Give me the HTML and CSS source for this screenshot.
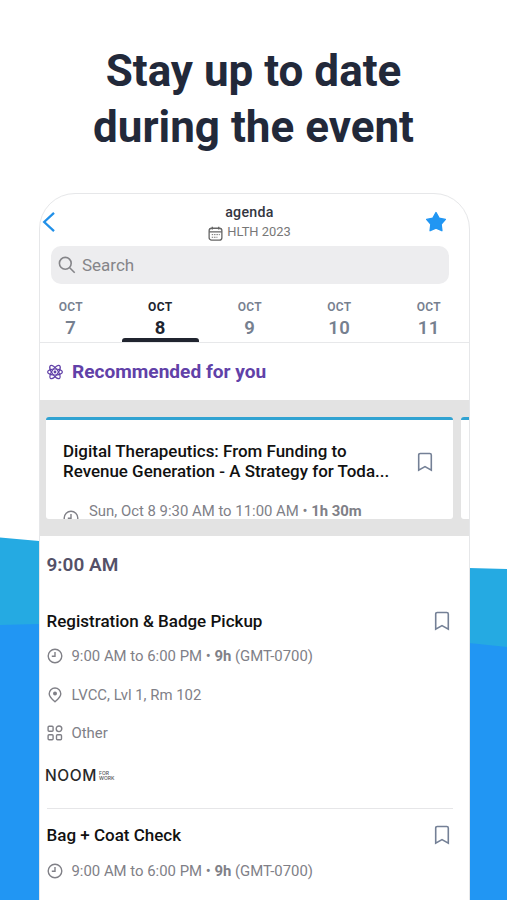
FILE: index.html
```html
<!DOCTYPE html>
<html lang="en">
<head>
<meta charset="utf-8">
<title>Agenda</title>
<link rel="stylesheet" href="styles.css">
</head>
<body>
<svg class="defs" width="0" height="0" aria-hidden="true">
  <symbol id="clock" viewBox="0 0 16 16"><circle cx="8" cy="8" r="6.8"/><path d="M8 4v4.2H4.8"/></symbol>
  <symbol id="bookmark" viewBox="0 0 16 20"><path d="M3.3 1.5h9.4q1.6 0 1.6 1.6v15L8 14.6l-6.3 3.5v-15q0-1.6 1.6-1.6z"/></symbol>
</svg>
<div class="screen">
  <svg class="backdrop" viewBox="0 0 507 900" aria-hidden="true">
    <path class="wave-light" d="M0 537.5L39 541L469 568L507 569V900H0z"/>
    <path class="wave-dark" d="M0 625L39 624Q260 620 469 643L507 647V900H0z"/>
  </svg>
  <h1 class="headline">Stay up to date<br>during the event</h1>
  <main class="phone">
    <header class="topbar">
      <svg class="back" viewBox="0 0 14 22"><path d="M12 1.8L2.2 11L12 20.2"/></svg>
      <div class="titles">
        <div class="title">agenda</div>
        <div class="event">
          <svg class="calendar" viewBox="0 0 16 16"><rect x="1.2" y="2.4" width="13.6" height="12.6" rx="2.6"/><path d="M1.2 6.2h13.6M4.6 .8v3M11.4 .8v3"/><path class="dots" d="M4 9.2h8.6M4 12h6"/></svg>
          <span>HLTH 2023</span>
        </div>
      </div>
      <svg class="star" viewBox="0 0 22 22"><path d="M11 1.6l3.1 5.6 6.3 1.2-4.3 4.8.8 6.5L11 17.2l-5.9 2.5.8-6.5L1.6 8.4l6.3-1.2z"/></svg>
    </header>
    <div class="search">
      <svg viewBox="0 0 18 18"><circle cx="7.3" cy="7.3" r="5.9"/><path d="M11.7 11.7l5 5"/></svg>
      <span>Search</span>
    </div>
    <nav class="days">
      <div class="day"><small>OCT</small><b>7</b></div>
      <div class="day active"><small>OCT</small><b>8</b></div>
      <div class="day"><small>OCT</small><b>9</b></div>
      <div class="day"><small>OCT</small><b>10</b></div>
      <div class="day"><small>OCT</small><b>11</b></div>
    </nav>
    <div class="recommended">
      <svg viewBox="0 0 16 16"><ellipse cx="8" cy="8" rx="3" ry="7.4" transform="rotate(90 8 8)"/><ellipse cx="8" cy="8" rx="3" ry="7.8" transform="rotate(35 8 8)"/><ellipse cx="8" cy="8" rx="3" ry="7.8" transform="rotate(145 8 8)"/><circle class="core" cx="8" cy="8" r="1.4"/></svg>
      <h2>Recommended for you</h2>
    </div>
    <section class="carousel">
      <article class="card">
        <div class="card-head">
          <h3>Digital Therapeutics: From Funding to<br>Revenue Generation - A Strategy for Toda...</h3>
          <svg class="bookmark"><use href="#bookmark"/></svg>
        </div>
        <div class="card-time"><svg class="icon"><use href="#clock"/></svg><span>Sun, Oct 8 9:30 AM to 11:00 AM • <b>1h 30m</b></span></div>
      </article>
      <article class="card"></article>
    </section>
    <h2 class="hour">9:00 AM</h2>
    <section class="session">
      <div class="session-head"><h3>Registration &amp; Badge Pickup</h3><svg class="bookmark"><use href="#bookmark"/></svg></div>
      <div class="meta"><svg class="icon"><use href="#clock"/></svg><span>9:00 AM to 6:00 PM • <b>9h</b> (GMT-0700)</span></div>
      <div class="meta"><svg class="icon" viewBox="0 0 16 16"><path d="M8 14.8C5 12.2 2.2 10 2.2 6.8a5.8 5.8 0 0 1 11.6 0C13.8 10 11 12.2 8 14.8z"/><circle class="solid" cx="8" cy="6.6" r="2"/></svg><span>LVCC, Lvl 1, Rm 102</span></div>
      <div class="meta"><svg class="icon" viewBox="0 0 16 16"><rect x="1.1" y="1.3" width="5" height="5" rx="1"/><circle cx="12" cy="3.8" r="2.8"/><rect x="1.1" y="9.7" width="5" height="5" rx="1"/><rect x="9.5" y="9.7" width="5" height="5" rx="1"/></svg><span>Other</span></div>
      <div class="sponsor"><span class="noom">NOOM</span><span class="work">FOR<br>WORK</span></div>
    </section>
    <section class="session next">
      <div class="session-head"><h3>Bag + Coat Check</h3><svg class="bookmark"><use href="#bookmark"/></svg></div>
      <div class="meta"><svg class="icon"><use href="#clock"/></svg><span>9:00 AM to 6:00 PM • <b>9h</b> (GMT-0700)</span></div>
    </section>
  </main>
</div>
</body>
</html>
```
FILE: styles.css
```css
* { box-sizing: border-box; }
body { margin: 0; background: #fff; font-family: Roboto, "Liberation Sans", sans-serif; }
h1, h2, h3 { margin: 0; }
svg { display: block; flex: none; fill: none; stroke: currentColor; stroke-width: 1.4; }
.defs { position: absolute; }
.screen { position: relative; height: 900px; overflow: hidden; }
.backdrop { position: absolute; inset: 0; width: 507px; height: 900px; stroke: none; }
.wave-light { fill: #25aae2; }
.wave-dark { fill: #2196f3; }
.headline { position: relative; height: 193px; padding-top: 43px; text-align: center; font-size: 44px; line-height: 56px; font-weight: 700; color: #22293a; }
.phone { position: relative; width: 431px; height: 760px; margin-left: 38.5px; overflow: hidden; background: #fff; border: 1px solid #e6e7e9; border-radius: 36px 36px 0 0; }
.topbar { display: flex; justify-content: space-between; height: 52px; padding: 17px 21.5px 0 2.5px; }
.back { width: 14px; height: 22px; color: #2190e8; stroke-width: 2.3; }
.titles { margin-top: -7px; padding-left: 18px; text-align: center; }
.title { font-size: 14.2px; line-height: 17px; font-weight: 500; color: #33363f; letter-spacing: .3px; }
.event { display: flex; align-items: center; gap: 4px; margin-top: 2px; font-size: 12.9px; line-height: 18px; color: #777; }
.calendar { width: 15px; height: 15px; margin-top: 2px; color: #666; }
.dots { stroke-dasharray: 1.5 1; stroke-width: 1; }
.star { width: 22px; height: 22px; fill: #2196f3; stroke: #2196f3; stroke-linejoin: round; }
.search { display: flex; align-items: center; gap: 6px; width: 398px; height: 38px; margin-left: 11px; padding-left: 7.5px; border-radius: 10px; background: #ededef; color: #858589; font-size: 17px; }
.search svg { width: 18px; height: 18px; stroke-width: 1.6; }
.days { display: flex; height: 59px; margin: 0 0 0 -13.5px; border-bottom: 1px solid #e7e8ea; }
.day { flex: none; width: 89.5px; display: flex; flex-direction: column; align-items: center; padding-top: 15px; color: #76808f; }
.day small { font-size: 12px; line-height: 16px; font-weight: 600; letter-spacing: .3px; }
.day b { font-size: 18.5px; line-height: 26px; font-weight: 600; letter-spacing: .4px; }
.active { color: #20242f; }
.active small, .active b { font-weight: 700; }
.active::after { content: ""; width: 77px; height: 4px; margin-top: -3px; border-radius: 3px 3px 0 0; background: #20242f; }
.recommended { display: flex; align-items: center; gap: 9px; height: 57px; padding-left: 7.5px; color: #6141a8; }
.recommended svg { width: 16px; height: 16px; stroke-width: 1.2; }
.recommended h2 { font-size: 19.1px; font-weight: 700; }
.core { fill: currentColor; stroke: none; }
.carousel { display: flex; gap: 8px; height: 136px; padding: 17px 0 17px 6.5px; background: #e3e3e3; }
.card { flex: none; width: 407px; height: 102px; overflow: hidden; padding: 22px 0 0 17px; background: #fff; border-top: 3px solid #31a3d2; border-radius: 3px; }
.card-head { display: flex; justify-content: space-between; padding-right: 20px; }
.card h3 { font-size: 16.95px; line-height: 19.6px; font-weight: 500; color: #111; white-space: nowrap; }
.bookmark { width: 16px; height: 20px; color: #748096; stroke-width: 1.6; }
.card-head .bookmark { margin-top: 10px; }
.card-time { display: flex; gap: 10px; margin-top: 20px; font-size: 14.9px; line-height: 20px; color: #808087; white-space: nowrap; }
.card-time .icon { margin-top: 9px; }
.icon { width: 16px; height: 16px; }
.hour { height: 69px; padding: 17px 0 0 7px; font-size: 19px; line-height: 24px; font-weight: 600; color: #545168; }
.session { margin: 0 15.5px 0 7px; color: #808087; }
.session-head { display: flex; justify-content: space-between; align-items: center; height: 31.5px; padding-right: 3px; }
.session h3 { font-size: 17px; line-height: 20px; font-weight: 500; color: #111; }
.meta { display: flex; align-items: center; gap: 9px; height: 38.4px; padding-top: 1px; font-size: 14.9px; white-space: nowrap; }
.solid { fill: currentColor; stroke: none; }
.sponsor { display: flex; align-items: center; gap: 2px; height: 47px; margin-left: -1.5px; padding-top: 1px; color: #292929; }
.noom { font: 500 15.5px/20px Inter, sans-serif; letter-spacing: .6px; }
.work { font: 500 5px/5px Inter, sans-serif; color: #555; }
.next { margin-top: 9px; padding-top: 11px; border-top: 1px solid #e6e6e8; }
```
